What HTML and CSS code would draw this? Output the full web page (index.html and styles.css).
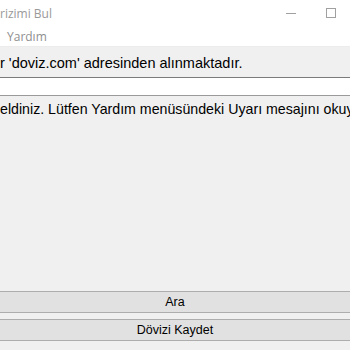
FILE: index.html
```html
<!DOCTYPE html>
<html lang="tr">
<head>
    <meta charset="UTF-8">
    <meta name="viewport" content="width=device-width, initial-scale=1.0">
    <title>Dövizimi Bul</title>
    <link rel="stylesheet" href="styles.css">
</head>
<body>
    <div class="window">
        <div class="titleBar">
            <span class="title">rizimi Bul</span>
            <div class="controls">
                <span class="minimize"></span>
                <span class="maximize"></span>
            </div>
        </div>
        <div class="menuBar">
            <span class="menuItem">Yardım</span>
        </div>
        <div class="content">
            <p class="infoLabel">r 'doviz.com' adresinden alınmaktadır.</p>
            <input type="text" class="resultBox">
            <p class="welcome">eldiniz. Lütfen Yardım menüsündeki Uyarı mesajını okuyunuz.</p>
            <div class="buttons">
                <button class="winButton">Ara</button>
                <button class="winButton">Dövizi Kaydet</button>
            </div>
        </div>
    </div>
</body>
</html>
```
FILE: styles.css
```css
body {
    margin: 0;
    font-family: "Liberation Sans", Arial, sans-serif;
    overflow: hidden;
}
.window {
    width: 350px;
    height: 350px;
    display: flex;
    flex-direction: column;
    background-color: #f0f0f0;
}
.titleBar {
    height: 30px;
    background-color: #ffffff;
    display: flex;
    align-items: center;
    justify-content: space-between;
}
.title {
    font-family: "Open Sans", "Noto Sans", sans-serif;
    font-size: 12px;
    color: #999999;
    margin-top: -4px;
}
.controls {
    display: flex;
    align-items: center;
    gap: 30px;
    margin-right: 14px;
    margin-top: -4px;
}
.minimize {
    width: 10px;
    height: 1px;
    background-color: #a0a0a0;
}
.maximize {
    width: 8px;
    height: 8px;
    border: 1px solid #a0a0a0;
}
.menuBar {
    height: 16px;
    background-color: #ffffff;
    border-bottom: 1px solid #ececec;
    display: flex;
    align-items: center;
    padding-left: 7px;
}
.menuItem {
    font-family: "Open Sans", "Noto Sans", sans-serif;
    font-size: 12px;
    color: #8f8f8f;
    margin-top: -3px;
}
.content {
    flex: 1;
    display: flex;
    flex-direction: column;
    padding-top: 8px;
    padding-bottom: 9px;
}
.infoLabel, .welcome {
    margin: 0;
    font-size: 14.5px;
    line-height: 17px;
    color: #000000;
    white-space: nowrap;
    overflow: hidden;
}
.resultBox {
    margin: 5px 0 0 0;
    height: 17px;
    padding: 0;
    border: none;
    border-top: 1px solid #7a7a7a;
    border-bottom: 1px solid #9a9a9a;
    background-color: #ffffff;
    width: 100%;
    outline: none;
}
.welcome {
    margin-top: 5px;
    font-size: 14.2px;
}
.buttons {
    margin-top: auto;
    display: flex;
    flex-direction: column;
    gap: 6px;
}
.winButton {
    height: 22px;
    margin: 0;
    padding: 0;
    border: none;
    border-top: 1px solid #adadad;
    border-bottom: 1px solid #adadad;
    background-color: #e1e1e1;
    font-family: "Liberation Sans", Arial, sans-serif;
    font-size: 12.5px;
    color: #000000;
    width: 100%;
}
```
